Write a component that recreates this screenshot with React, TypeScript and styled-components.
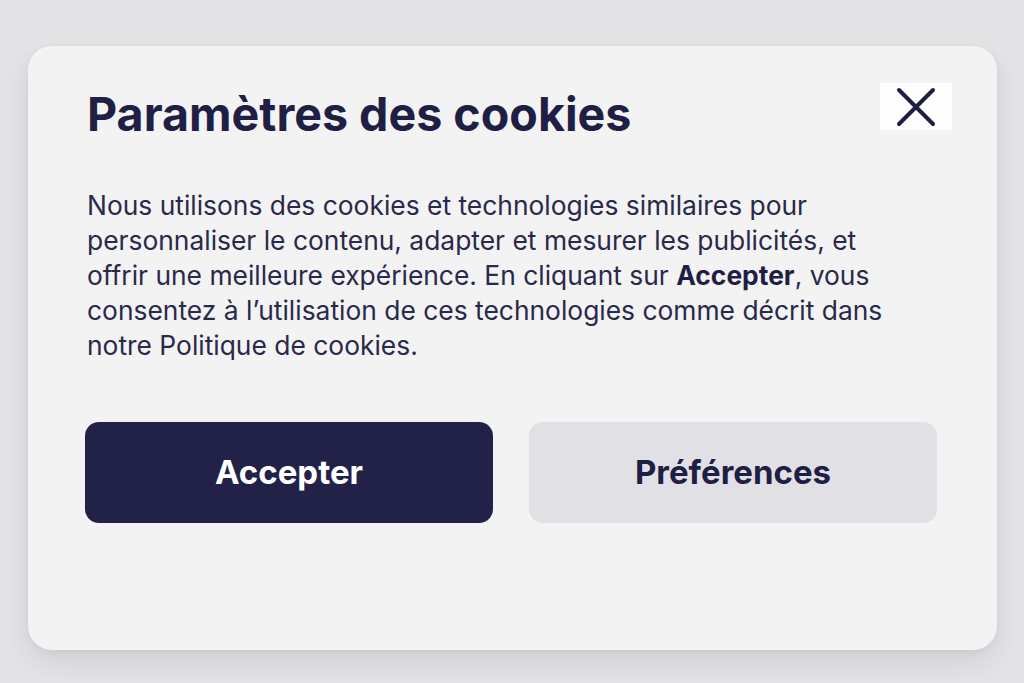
import styled, { createGlobalStyle } from "styled-components";

const GlobalStyle = createGlobalStyle`
  html, body {
    margin: 0;
    padding: 0;
    background-color: #e4e4e7;
  }
  * {
    box-sizing: border-box;
  }
`;

const Page = styled.div`
  width: 1024px;
  height: 683px;
  padding: 46px 27px 33px 28px;
  background-color: #e4e4e7;
`;

const Card = styled.div`
  height: 604px;
  padding: 40px 60px 0 57px;
  background-color: #f3f3f4;
  border-radius: 24px;
  box-shadow: 0 12px 28px rgba(40, 40, 60, 0.1), 0 2px 6px rgba(40, 40, 60, 0.05);
  display: flex;
  flex-direction: column;
`;

const Header = styled.div`
  display: flex;
  justify-content: space-between;
  align-items: flex-start;
`;

const Title = styled.h1`
  margin: 0 0 0 2px;
  font-family: Inter, Roboto, "Liberation Sans", sans-serif;
  font-size: 46.6px;
  line-height: 57.6px;
  font-weight: 700;
  color: #1f1f45;
`;

const CloseButton = styled.button`
  width: 72px;
  height: 47px;
  margin: -3px -15px 0 0;
  border: none;
  padding: 0;
  background-color: #fdfdfd;
  display: flex;
  align-items: center;
  justify-content: center;
  cursor: pointer;
`;

const Text = styled.p`
  margin: 44px 0 0 2px;
  font-family: Inter, Roboto, "Liberation Sans", sans-serif;
  font-size: 26.4px;
  line-height: 35px;
  color: #29294b;
  white-space: nowrap;
  strong {
    font-weight: 700;
    color: #1f1f45;
  }
`;

const Actions = styled.div`
  margin-top: 59px;
  display: grid;
  grid-template-columns: 1fr 1fr;
  gap: 36px;
`;

const Button = styled.button<{ $primary?: boolean }>`
  height: 101px;
  border: none;
  border-radius: 14px;
  font-family: Inter, Roboto, "Liberation Sans", sans-serif;
  font-size: 33px;
  font-weight: 700;
  color: ${(p) => (p.$primary ? "#ffffff" : "#1f1f45")};
  background-color: ${(p) => (p.$primary ? "#222248" : "#e1e1e5")};
  cursor: pointer;
`;

function App() {
  return (
    <>
      <GlobalStyle />
      <Page>
        <Card>
          <Header>
            <Title>Paramètres des cookies</Title>
            <CloseButton aria-label="Fermer">
              <svg width="40" height="40" viewBox="0 0 40 40">
                <path
                  d="M3 3 L37 37 M37 3 L3 37"
                  stroke="#1f1f45"
                  strokeWidth="4"
                  strokeLinecap="round"
                  fill="none"
                />
              </svg>
            </CloseButton>
          </Header>
          <Text>
            Nous utilisons des cookies et technologies similaires pour
            <br />
            personnaliser le contenu, adapter et mesurer les publicités, et
            <br />
            offrir une meilleure expérience. En cliquant sur{" "}
            <strong>Accepter</strong>, vous
            <br />
            consentez à l’utilisation de ces technologies comme décrit dans
            <br />
            notre Politique de cookies.
          </Text>
          <Actions>
            <Button $primary>Accepter</Button>
            <Button>Préférences</Button>
          </Actions>
        </Card>
      </Page>
    </>
  );
}

export default App;
